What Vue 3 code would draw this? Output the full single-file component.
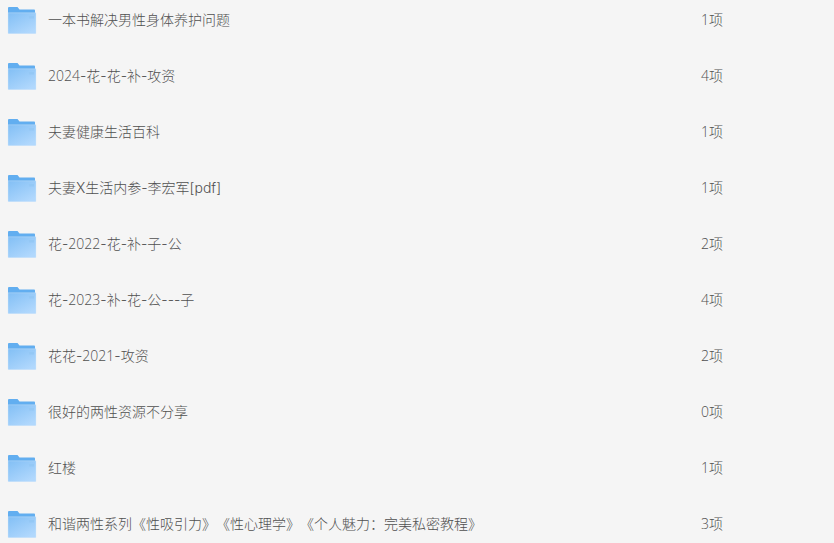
<template>
  <div class="page">
    <ul class="file-list">
      <li v-for="item in items" :key="item.id" class="file-row">
        <svg class="folder" width="30" height="28" viewBox="0 0 30 28">
          <defs>
            <linearGradient :id="'front-' + item.id" x1="0" y1="0" x2="0.7" y2="1">
              <stop offset="0" stop-color="#82bff5" />
              <stop offset="1" stop-color="#b1d8fd" />
            </linearGradient>
          </defs>
          <path d="M1 2.2C1 1.5 1.5 1 2.2 1H10.5L12.5 3.6H27.2C27.7 3.6 28 3.9 28 4.4V8H1Z" fill="#62aef0" />
          <path d="M1 6.8H29V27C29 27.4 28.7 27.7 28.3 27.7H1.7C1.3 27.7 1 27.4 1 27Z" :fill="'url(#front-' + item.id + ')'" stroke="#d3e8fb" stroke-width="0.4" />
          <rect x="22" y="10" width="5" height="2.5" fill="#94c8f5" />
        </svg>
        <span class="file-name">
          <span v-for="(part, i) in splitDigits(item.name)" :key="i" :class="{ num: /\d/.test(part) }">{{ part }}</span>
        </span>
        <span class="file-count"><span class="num">{{ item.count }}</span>项</span>
      </li>
    </ul>
  </div>
</template>

<script setup>
const items = [
  { id: 1, name: '一本书解决男性身体养护问题', count: 1 },
  { id: 2, name: '2024-花-花-补-攻资', count: 4 },
  { id: 3, name: '夫妻健康生活百科', count: 1 },
  { id: 4, name: '夫妻X生活内参-李宏军[pdf]', count: 1 },
  { id: 5, name: '花-2022-花-补-子-公', count: 2 },
  { id: 6, name: '花-2023-补-花-公---子', count: 4 },
  { id: 7, name: '花花-2021-攻资', count: 2 },
  { id: 8, name: '很好的两性资源不分享', count: 0 },
  { id: 9, name: '红楼', count: 1 },
  { id: 10, name: '和谐两性系列《性吸引力》《性心理学》《个人魅力：完美私密教程》', count: 3 }
]

// 숫자만 폭이 다른 글꼴로 표시
function splitDigits(name) {
  return name.split(/(\d+)/).filter(Boolean)
}
</script>

<style>
html, body {
  margin: 0;
  background: #f5f5f5;
  overflow: hidden;
}
</style>

<style scoped>
.page {
  height: 543px;
  overflow: hidden;
  background: #f5f5f5;
  font-family: Inter, "Noto Sans CJK SC", sans-serif;
  font-size: 14px;
  font-weight: 300;
  color: #505050;
  text-spacing-trim: space-all;
}

.file-list {
  list-style: none;
  margin: -8px 0 0;
  padding: 0;
}

.file-row {
  display: flex;
  align-items: center;
  height: 56px;
  padding-left: 7px;
}

.folder {
  flex-shrink: 0;
  margin-right: 11px;
}

.file-name {
  width: 653px;
  flex-shrink: 0;
  padding-bottom: 2px;
}

.file-count {
  padding-bottom: 2px;
}

.num {
  font-family: "Open Sans", sans-serif;
}
</style>
